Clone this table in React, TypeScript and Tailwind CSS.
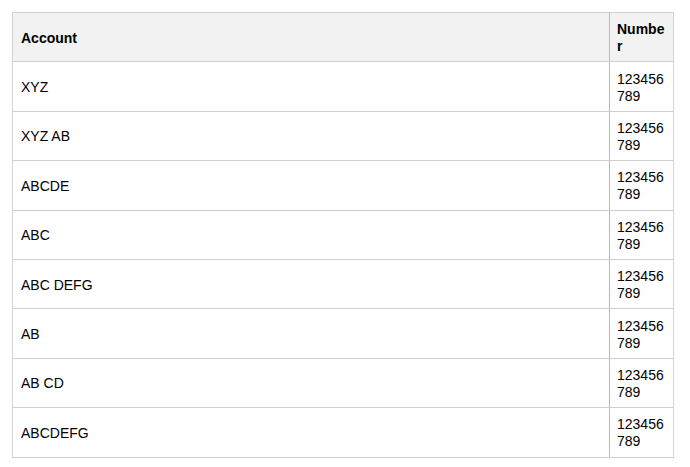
import React from 'react';

const rows = ['XYZ', 'XYZ AB', 'ABCDE', 'ABC', 'ABC DEFG', 'AB', 'AB CD', 'ABCDEFG'];

const App = () => {
  return (
    <div className="bg-white w-[690px] h-[467px] pt-[12px] pl-[12px] font-['Liberation_Sans',Arial,sans-serif] text-[14px] leading-[17px] text-black">
      <table className="w-[662px] table-fixed border-collapse border border-[#d4d4d4]">
        <colgroup>
          <col />
          <col className="w-[64px]" />
        </colgroup>
        <thead>
          <tr className="bg-[#f2f2f2] h-[49.4px]">
            <th className="text-left font-bold px-2 pt-[8px] pb-[6px] border-b border-[#cfcfcf]">Account</th>
            <th className="text-left font-bold pl-[7px] pr-[5px] pt-[8px] pb-[6px] border-b border-l border-[#cfcfcf] border-l-[#b8b8b8] break-all">Number</th>
          </tr>
        </thead>
        <tbody>
          {rows.map((name, i) => (
            <tr key={i} className="h-[49.4px]">
              <td className="px-2 pt-[8px] pb-[6px] border-b border-[#cfcfcf]">{name}</td>
              <td className="pl-[7px] pr-[5px] pt-[8px] pb-[6px] border-b border-l border-[#cfcfcf] border-l-[#b8b8b8] break-all">123456789</td>
            </tr>
          ))}
        </tbody>
      </table>
    </div>
  );
};

export default App;
